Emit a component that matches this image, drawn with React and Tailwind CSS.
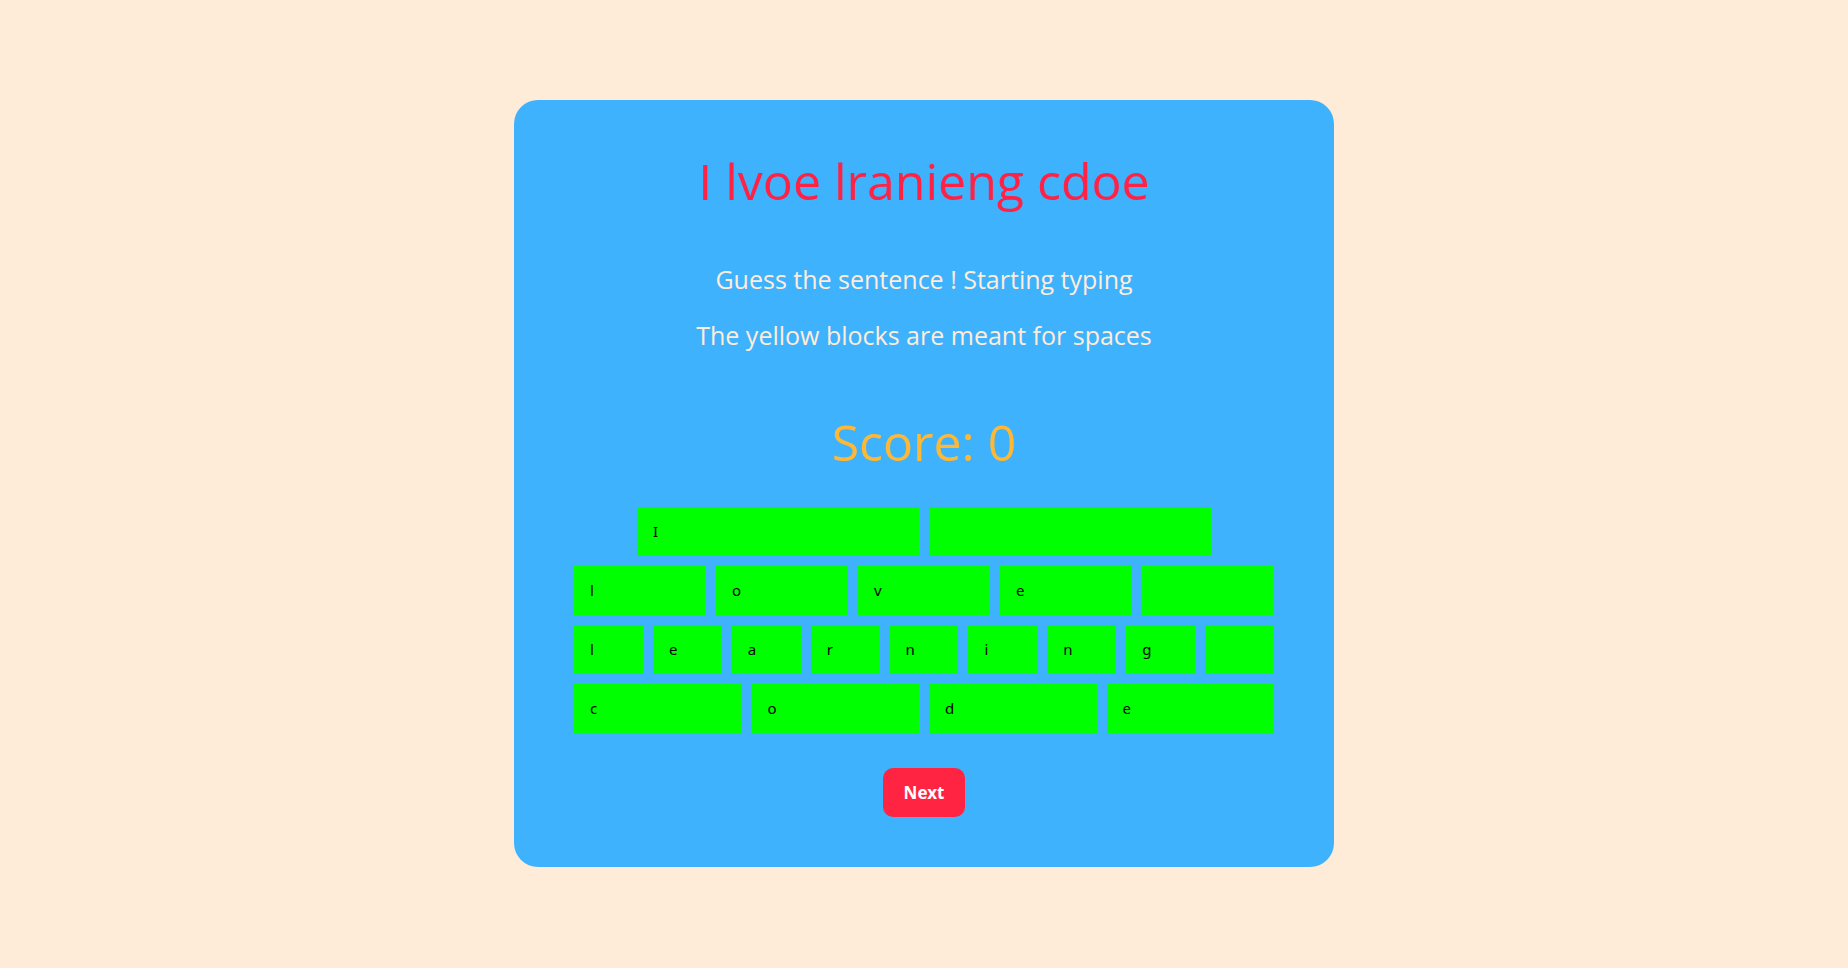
import React from 'react';

// Sentence rows: each row is a word, '' marks a space block
const rows = [
    { blocks: ['I', ''], fixed: true },
    { blocks: ['l', 'o', 'v', 'e', ''] },
    { blocks: ['l', 'e', 'a', 'r', 'n', 'i', 'n', 'g', ''] },
    { blocks: ['c', 'o', 'd', 'e'] },
];

const Block = ({ letter, fixed }) => (
    <div
        className={`${fixed ? 'w-[282px]' : 'flex-1'} h-[49px] bg-[#00ff00] flex items-center pl-4 text-[15px] text-black`}
        style={{ fontFamily: '"Noto Sans", sans-serif' }}
    >
        {letter}
    </div>
);

const App = () => {
    return (
        <div className="min-h-screen w-full bg-[#ffecd8] flex justify-center pt-[100px]" style={{ fontFamily: '"Open Sans", sans-serif' }}>
            <div className="w-[820px] h-[767px] bg-[#3fb2fe] rounded-[24px] px-[60px] pt-[46px] flex flex-col items-center">
                <h1 className="text-[50px] leading-[70px] text-[#ff2244] text-center">I lvoe lranieng cdoe</h1>

                <p className="mt-[47px] text-[25px] leading-[33px] text-[#ffecd8] text-center">Guess the sentence ! Starting typing</p>
                <p className="mt-[23px] text-[25px] leading-[33px] text-[#ffecd8] text-center">The yellow blocks are meant for spaces</p>

                <h2 className="mt-[55px] text-[50px] leading-[70px] text-[#ffb833] text-center">Score: 0</h2>

                {/* Sentence blocks */}
                <div className="mt-[30px] w-full flex flex-col gap-[10px]">
                    {rows.map((row, i) => (
                        <div key={i} className="flex justify-center gap-[10px]">
                            {row.blocks.map((b, j) => (
                                <Block key={j} letter={b} fixed={row.fixed} />
                            ))}
                        </div>
                    ))}
                </div>

                <button
                    className="mt-[35px] h-[49px] w-[82px] rounded-[10px] bg-[#ff2442] text-white font-bold text-[17px]"
                    style={{ fontFamily: '"Noto Sans", sans-serif' }}
                >
                    Next
                </button>
            </div>
        </div>
    );
};

export default App;
